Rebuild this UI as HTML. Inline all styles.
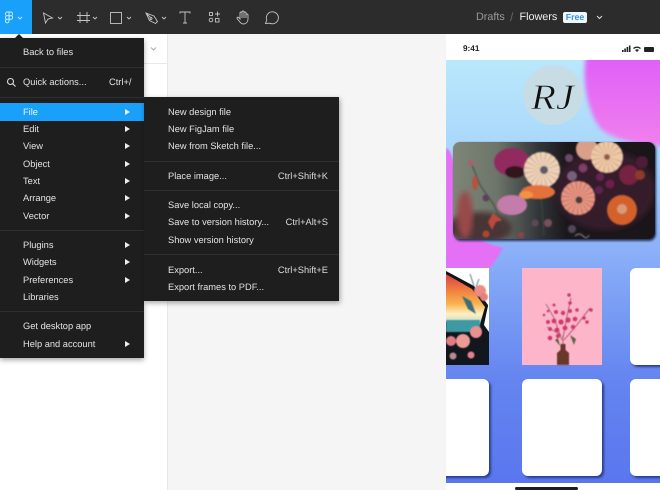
<!DOCTYPE html>
<html><head><meta charset="utf-8"><style>
html,body{margin:0;padding:0}
body{width:660px;height:490px;overflow:hidden;position:relative;background:#f5f5f5;font-family:"Liberation Sans",sans-serif;text-rendering:geometricPrecision}
#w{position:absolute;left:0;top:0;width:660px;height:490px;overflow:hidden;filter:blur(.3px)}
.a{position:absolute}
.t{position:absolute;color:#e2e2e2;font-size:9.300px;line-height:16px;height:16px;white-space:nowrap}
.r{position:absolute;color:#dcdcdc;font-size:9.300px;line-height:16px;height:16px;white-space:nowrap;right:0}
.s{position:absolute;height:1px;background:#2f2f2f}
.ar{position:absolute;left:125px;width:0;height:0;border-left:5px solid #eee;border-top:3.500px solid transparent;border-bottom:3.500px solid transparent}
svg{position:absolute;display:block}
</style></head><body><div id="w">
<div class="a" style="left:0;top:34px;width:168px;height:456px;background:#fff"></div>
<div class="a" style="left:144px;top:63px;width:24px;height:1px;background:#e8e8e8"></div>
<div class="a" style="left:167px;top:34px;width:1px;height:456px;background:#e8e8e8"></div>
<svg style="left:149px;top:46px" width="10" height="6"><path d="M2 1.500l2.500 2.500 2.500-2.500" fill="none" stroke="#aaa"/></svg>

<!-- toolbar -->
<div class="a" style="left:0;top:0;width:660px;height:34px;background:#2c2c2c"></div>
<div class="a" style="left:0;top:0;width:32px;height:34px;background:#18a0fb"></div>
<svg style="left:0;top:0" width="300" height="34" fill="none" stroke="#c4c4c4" stroke-width=".9">
<path d="M9 12h-1.700a1.800 1.800 0 0 0 0 3.700H9zM9 12h1.700a1.800 1.800 0 0 1 0 3.700H9zM9 15.700h-1.700a1.800 1.800 0 0 0 0 3.600H9zM9 19.300h-1.700a1.800 1.800 0 1 0 1.700 1.900zM9 17.500a1.800 1.800 0 1 0 3.600 0a1.800 1.800 0 1 0-3.600 0z" stroke="#d6efff"/>
<path d="M18 17l2 2 2-2" stroke="#cfeaff"/>
<path d="M43.500 13l9 5-4.500 1-2.500 4z"/><path d="M58 17l2 2 2-2"/>
<path d="M80 12v11M87 12v11M77 15.500h13M77 20.500h13"/><path d="M93 17l2 2 2-2"/>
<rect x="110.500" y="12.500" width="11" height="11"/><path d="M127 17l2 2 2-2"/>
<path d="M146 13l8 3 3.500 5.500-2 2-6-3zM146 13l4.500 4.500"/><circle cx="151" cy="18.500" r="1"/><path d="M162 17l2 2 2-2"/>
<path d="M180 13.500v-1.500h10v1.500M185 12v11M183 23h4"/>
<rect x="209.500" y="12.500" width="3" height="3"/><path d="M215 14h5M217.500 11.500v5"/><circle cx="211" cy="20" r="1.800"/><rect x="215.500" y="18.500" width="3.500" height="3.500"/>
<path d="M240 19v-6a1 1 0 0 1 2 0v-1a1 1 0 0 1 2 0v1a1 1 0 0 1 2 0v2a1 1 0 0 1 2 0v4c0 3-2 5-4.500 5-2 0-3-1-4-2.500l-2.500-3c-.5-1 .8-1.800 1.600-1z"/><path d="M242 13v5M244 13v5M246 15v3"/>
<path d="M265.500 23.500l1.300-3.500a6 6 0 1 1 3 3.200z"/>
</svg>

<div class="a" style="left:476px;top:10px;color:#9a9a9a;font-size:10.800px;line-height:15px">Drafts</div>
<div class="a" style="left:510px;top:10px;color:#666;font-size:12px;line-height:15px">/</div>
<div class="a" style="left:519.500px;top:10px;color:#f0f0f0;font-size:10.800px;line-height:15px">Flowers</div>
<div class="a" style="left:563px;top:12px;width:24px;height:11px;border-radius:2px;background:#eef7fd;color:#3d93cc;font-size:8.800px;line-height:11px;text-align:center;font-weight:bold">Free</div>
<svg style="left:595px;top:14px" width="10" height="8"><path d="M2 2l2.500 2.500 2.500-2.500" fill="none" stroke="#ddd"/></svg>

<!-- phone -->
<div class="a" style="left:446px;top:34px;width:214px;height:456px;background:#fff"></div>
<div class="a" style="left:463px;top:42px;font-size:8.200px;font-weight:bold;color:#222;line-height:14px">9:41</div>
<svg style="left:620px;top:42px" width="36" height="14" fill="#222">
<rect x="2" y="8" width="1.600" height="2"/><rect x="4.300" y="6.500" width="1.600" height="3.500"/><rect x="6.600" y="5" width="1.600" height="5"/><rect x="8.900" y="3.500" width="1.600" height="6.500"/>
<path d="M13 6a6 6 0 0 1 8 0l-1 1a4.500 4.500 0 0 0-6 0zM15 8a3 3 0 0 1 4 0l-2 2z"/>
<rect x="24" y="5" width="10" height="5" rx="1"/>
</svg>

<svg style="left:446px;top:60px" width="214" height="423" viewBox="446 60 214 423">
<defs>
<linearGradient id="bg" x1="0" y1="0" x2="0" y2="1">
<stop offset="0" stop-color="#b9e8fb"/><stop offset=".22" stop-color="#a9d6fb"/><stop offset=".45" stop-color="#8bb0f8"/><stop offset=".75" stop-color="#6585f0"/><stop offset="1" stop-color="#5a76ee"/>
</linearGradient>
<linearGradient id="pk" x1="0" y1="0" x2="0" y2="1"><stop offset="0" stop-color="#df5ff8"/><stop offset="1" stop-color="#f080ee"/></linearGradient>
<linearGradient id="cardbg" x1="0" y1="0" x2="1" y2="0">
<stop offset="0" stop-color="#7e8678"/><stop offset=".22" stop-color="#6d7469"/><stop offset=".42" stop-color="#33373a"/><stop offset=".56" stop-color="#1b181c"/><stop offset="1" stop-color="#1a1518"/>
</linearGradient>
<linearGradient id="sun" x1="0" y1="0" x2="0" y2="1">
<stop offset="0" stop-color="#d83f4a"/><stop offset=".3" stop-color="#f07a3e"/><stop offset=".6" stop-color="#f8b44e"/><stop offset=".8" stop-color="#fff0c4"/><stop offset="1" stop-color="#bcd8c0"/>
</linearGradient>
<filter id="b1"><feGaussianBlur stdDeviation="3"/></filter>
<filter id="b2"><feGaussianBlur stdDeviation=".8"/></filter>
<filter id="b3"><feGaussianBlur stdDeviation=".5"/></filter>
<filter id="b4"><feGaussianBlur stdDeviation="2"/></filter>
<filter id="b5" x="-10%" y="-10%" width="120%" height="120%"><feGaussianBlur stdDeviation="1"/></filter>
<clipPath id="cc"><rect x="453" y="142" width="202" height="97" rx="7"/></clipPath>
<clipPath id="c1"><rect x="446" y="268" width="43" height="97"/></clipPath>
</defs>
<rect x="446" y="60" width="214" height="423" fill="url(#bg)"/>
<path d="M586 56C581 85 590 118 602 130C615 140 640 145 664 146V56Z" fill="url(#pk)" filter="url(#b4)"/>
<path d="M446 148C452 150 456 165 456 200C456 225 470 240 503 248L497 258L490 268H446Z" fill="#e56ff5" filter="url(#b2)"/>
<circle cx="553" cy="95" r="30" fill="#c8dce6"/>
<text x="531" y="109" font-family="'Liberation Serif',serif" font-style="italic" font-size="36" fill="#111" stroke="#c8dce6" stroke-width=".7" textLength="43" lengthAdjust="spacingAndGlyphs">RJ</text>

<rect x="454" y="143" width="202" height="98" rx="7" fill="#26305f" filter="url(#b5)"/>
<g clip-path="url(#cc)">
<rect x="453" y="142" width="202" height="97" fill="url(#cardbg)"/>
<ellipse cx="480" cy="228" rx="32" ry="16" fill="#4a3534" filter="url(#b1)"/>
<ellipse cx="465" cy="215" rx="8" ry="24" fill="#9a4848" filter="url(#b1)"/>
<ellipse cx="605" cy="190" rx="50" ry="40" fill="#351a2a" filter="url(#b1)"/>
<g filter="url(#b2)">
<path d="M472 165l8 20 14 20 10 25M540 180l4 55" stroke="#3b4a3a" stroke-width="1" fill="none"/>
<circle cx="471" cy="163" r="3" fill="#a8606f"/>
<ellipse cx="475" cy="183" rx="3" ry="7" fill="#b4533f"/>
<circle cx="486" cy="198" r="3.500" fill="#5d3f5d"/>
<ellipse cx="512" cy="162" rx="18" ry="14" fill="#922c5f"/>
<ellipse cx="515" cy="172" rx="10" ry="6" fill="#31141f"/>
<circle cx="542" cy="170" r="18" fill="#dcbba0"/>
<circle cx="542" cy="170" r="9" fill="none" stroke="#eed4ba" stroke-width="18" stroke-dasharray="1.800 1.200"/>
<circle cx="544" cy="170" r="4" fill="#5c5a68"/>
<circle cx="587" cy="149" r="11" fill="#d8a088"/>
<circle cx="607" cy="157" r="16" fill="#dcb494"/>
<circle cx="607" cy="157" r="8" fill="none" stroke="#efcaa8" stroke-width="16" stroke-dasharray="1.800 1.200"/>
<circle cx="607" cy="157" r="3" fill="#8d5d4a"/>
<ellipse cx="538" cy="192" rx="17" ry="7" fill="#e4713a"/>
<ellipse cx="526" cy="195" rx="7" ry="4" fill="#f09343"/>
<circle cx="578" cy="198" r="17" fill="#cf7c6c"/>
<circle cx="578" cy="198" r="8.500" fill="none" stroke="#e89684" stroke-width="17" stroke-dasharray="1.800 1"/>
<circle cx="579" cy="200" r="3.500" fill="#4a3b3b"/>
<circle cx="622" cy="210" r="15" fill="#d4602a"/>
<circle cx="622" cy="209" r="5" fill="#d89a78"/>
<ellipse cx="512" cy="205" rx="15" ry="10" fill="#c47bac"/>
<circle cx="629" cy="175" r="10" fill="#762040"/>
<circle cx="642" cy="162" r="6" fill="#4e1c34"/>
<circle cx="569" cy="158" r="4" fill="#6d4a66"/><circle cx="572" cy="176" r="5" fill="#77617a"/><circle cx="583" cy="168" r="4.500" fill="#7f3c68"/><circle cx="600" cy="177" r="4" fill="#6b2454"/><circle cx="610" cy="184" r="4.500" fill="#701f4e"/><circle cx="599" cy="190" r="4" fill="#5f2250"/><circle cx="640" cy="175" r="5" fill="#8b3a2c"/>
<path d="M493 213l-5 9 4 8 4-8 6-2z" fill="#bb4a3c"/>
<circle cx="486" cy="234" r="3.500" fill="#a8492e"/><circle cx="521" cy="235" r="3" fill="#93433f"/>
<circle cx="535" cy="223" r="3.500" fill="#5e4a55"/><circle cx="548" cy="223" r="4" fill="#77505a"/><circle cx="572" cy="229" r="4" fill="#514658"/>
<path d="M575 236q4-4 8 0t6-1" stroke="#8a8a8a" fill="none"/>
</g></g>

<!-- tile 1 -->
<g clip-path="url(#c1)">
<rect x="446" y="268" width="43" height="97" fill="#12161d"/>
<path d="M446 268H489V332L484 325L488 305L474 286L446 271Z" fill="#fff"/>
<path d="M446 274L472 289L485 307L480 324L446 322Z" fill="url(#sun)"/>
<rect x="446" y="320" width="34" height="12" fill="#3d9aa2" filter="url(#b3)"/>
<path d="M446 273L473 288L487 306L482 326L484 345" stroke="#15131a" stroke-width="2" fill="none"/>
<g filter="url(#b3)">
<path d="M470 274l4 12M479 279l-3 8" stroke="#5c7f82"/>
<circle cx="480" cy="291" r="6" fill="#ea8d86"/><circle cx="484" cy="297" r="4" fill="#e58178"/>
<path d="M462 296l9 5 5 13-8-5z" fill="#3a6d7a"/>
<circle cx="476" cy="332" r="6" fill="#ec8f8f"/><circle cx="463" cy="341" r="7" fill="#ee9a95"/><circle cx="451" cy="341" r="5" fill="#e17c82"/><circle cx="471" cy="355" r="3.500" fill="#e6818a"/><circle cx="453" cy="356" r="3.500" fill="#b98a90"/>
</g>
</g>

<!-- tile 2 -->
<rect x="522" y="268" width="80" height="97" fill="#fdb6c9"/>
<g filter="url(#b3)">
<path d="M563 350v-14M562 340l-8-22-8-14M563 338l4-22 4-18M564 340l12-14 14-18M561 335l-14-8" stroke="#8a4358" stroke-width=".7" fill="none"/>
<path d="M560.500 344h5v6l3.500 3v12h-12v-12l3.500-3z" fill="#68392a"/>
<g fill="#cf3a6c">
<circle cx="569" cy="295" r="1.800"/><circle cx="570" cy="303" r="1.800"/><circle cx="554" cy="305" r="1.500"/><circle cx="548" cy="311" r="1.300"/><circle cx="544" cy="315" r="1.300"/><circle cx="556" cy="312" r="2"/><circle cx="563" cy="313" r="2.200"/><circle cx="570" cy="311" r="2"/><circle cx="577" cy="310" r="1.800"/><circle cx="591" cy="310" r="1.800"/><circle cx="548" cy="322" r="2"/><circle cx="554" cy="321" r="2.400"/><circle cx="561" cy="322" r="2.600"/><circle cx="568" cy="320" r="2.600"/><circle cx="575" cy="319" r="2.300"/><circle cx="584" cy="318" r="1.800"/><circle cx="587" cy="322" r="1.800"/><circle cx="550" cy="329" r="2"/><circle cx="557" cy="330" r="2.400"/><circle cx="565" cy="328" r="2.400"/><circle cx="573" cy="327" r="2.200"/><circle cx="550" cy="338" r="2.300"/><circle cx="558" cy="336" r="2.100"/>
</g>
<path d="M555 340l5 6-2-8zM570 335l4 10 2-6z" fill="#5f6242"/>
</g>

<!-- white tile shadows -->
<g fill="#2c3e8c" filter="url(#b5)">
<rect x="632" y="270" width="50" height="97" rx="6"/>
<rect x="422" y="381" width="69" height="97" rx="6"/>
<rect x="524" y="381" width="80" height="97" rx="6"/>
<rect x="632" y="381" width="50" height="97" rx="6"/>
</g>
<g fill="#fff">
<rect x="630" y="268" width="50" height="97" rx="6"/>
<rect x="420" y="379" width="69" height="97" rx="6"/>
<rect x="522" y="379" width="80" height="97" rx="6"/>
<rect x="630" y="379" width="50" height="97" rx="6"/>
</g>
</svg>
<div class="a" style="left:515px;top:487px;width:63px;height:3px;background:#1c1c1c;border-radius:2px"></div>

<!-- caret -->
<div class="a" style="left:15px;top:34px;width:0;height:0;border-left:4px solid transparent;border-right:4px solid transparent;border-bottom:4px solid #1e1e1e"></div>

<!-- main menu -->
<div class="a" style="left:0;top:38px;width:144px;height:320px;background:#1e1e1e;box-shadow:0 2px 5px rgba(0,0,0,.35)">
<div class="t" style="left:23px;top:6px">Back to files</div>
<div class="s" style="left:0;top:29px;width:144px"></div>
<svg style="left:6px;top:39px" width="11" height="11" fill="none" stroke="#ddd" stroke-width="1.100"><circle cx="4.500" cy="4.500" r="3"/><path d="M6.800 6.800l2.700 2.700"/></svg>
<div class="t" style="left:23px;top:36px">Quick actions...</div>
<div class="t" style="left:109px;top:36px">Ctrl+/</div>
<div class="s" style="left:0;top:59px;width:144px"></div>
<div class="a" style="left:0;top:65px;width:144px;height:18px;background:#18a0fb"></div>
<div class="t" style="left:23px;top:66px;color:#eaf6ff">File</div><div class="ar" style="top:70.500px"></div>
<div class="t" style="left:23px;top:83px">Edit</div><div class="ar" style="top:88px"></div>
<div class="t" style="left:23px;top:100px">View</div><div class="ar" style="top:105px"></div>
<div class="t" style="left:23px;top:118px">Object</div><div class="ar" style="top:123px"></div>
<div class="t" style="left:23px;top:135px">Text</div><div class="ar" style="top:140px"></div>
<div class="t" style="left:23px;top:152px">Arrange</div><div class="ar" style="top:157px"></div>
<div class="t" style="left:23px;top:170px">Vector</div><div class="ar" style="top:175px"></div>
<div class="s" style="left:0;top:192px;width:144px"></div>
<div class="t" style="left:23px;top:199px">Plugins</div><div class="ar" style="top:204px"></div>
<div class="t" style="left:23px;top:216px">Widgets</div><div class="ar" style="top:221px"></div>
<div class="t" style="left:23px;top:234px">Preferences</div><div class="ar" style="top:239px"></div>
<div class="t" style="left:23px;top:251px">Libraries</div>
<div class="s" style="left:0;top:273px;width:144px"></div>
<div class="t" style="left:23px;top:280px">Get desktop app</div>
<div class="t" style="left:23px;top:298px">Help and account</div><div class="ar" style="top:303px"></div>
</div>

<!-- submenu -->
<div class="a" style="left:144px;top:97px;width:195px;height:204px;background:#1e1e1e;box-shadow:1px 2px 5px rgba(0,0,0,.35)">
<div class="t" style="left:24px;top:7px">New design file</div>
<div class="t" style="left:24px;top:24px">New FigJam file</div>
<div class="t" style="left:24px;top:41px">New from Sketch file...</div>
<div class="s" style="left:0;top:64px;width:195px"></div>
<div class="t" style="left:24px;top:71px">Place image...</div>
<div class="r" style="right:11px;top:71px">Ctrl+Shift+K</div>
<div class="s" style="left:0;top:93px;width:195px"></div>
<div class="t" style="left:24px;top:100px">Save local copy...</div>
<div class="t" style="left:24px;top:117px">Save to version history...</div>
<div class="r" style="right:11px;top:117px">Ctrl+Alt+S</div>
<div class="t" style="left:24px;top:135px">Show version history</div>
<div class="s" style="left:0;top:157px;width:195px"></div>
<div class="t" style="left:24px;top:165px">Export...</div>
<div class="r" style="right:11px;top:165px">Ctrl+Shift+E</div>
<div class="t" style="left:24px;top:182px">Export frames to PDF...</div>
</div>
</div></body></html>
